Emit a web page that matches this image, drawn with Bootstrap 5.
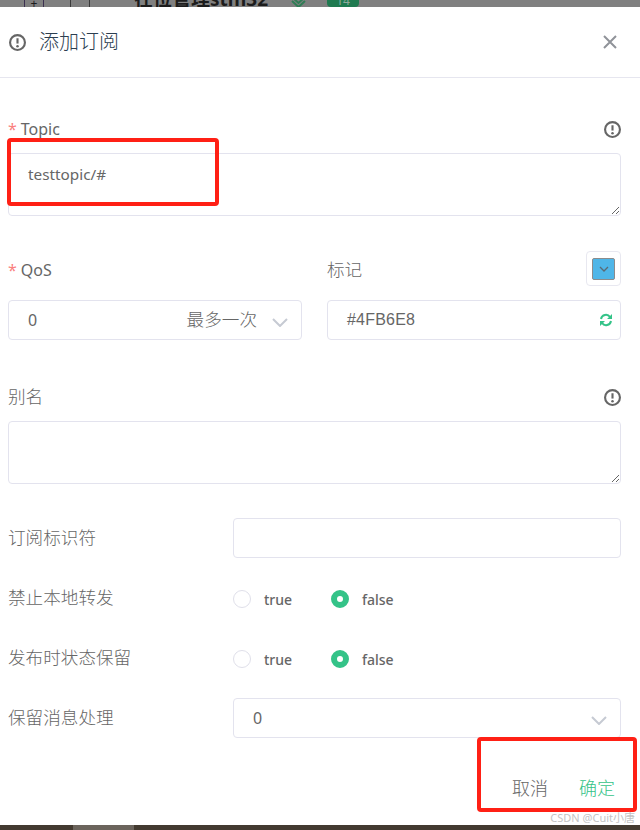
<!DOCTYPE html>
<html lang="zh">
<head>
<meta charset="UTF-8">
<meta name="viewport" content="width=device-width, initial-scale=1.0">
<title>添加订阅</title>
<link href="https://cdn.jsdelivr.net/npm/bootstrap@5.3.0/dist/css/bootstrap.min.css" rel="stylesheet">
<style>
html, body { height: 830px; overflow: hidden; }
body { position: relative; background: #fff; color: #666; font-family: "Noto Sans", "Noto Sans CJK SC", sans-serif; font-size: 16px; }
.back-strip { height: 7px; background: #808080; overflow: hidden; padding-left: 24px; color: #1c1c1c; }
.back-icons { width: 66px; height: 7px; margin-right: 44px; }
.back-plus { width: 20px; height: 7px; border: 1px solid #3c3050; border-top: 0; border-bottom: 0; text-align: center; font-size: 12px; line-height: 7px; }
.back-bars { width: 20px; height: 7px; border: 1px solid #3a3a3a; border-top: 0; border-bottom: 0; margin-left: 26px; }
.back-title { font-size: 19px; font-weight: 700; line-height: 19px; margin-top: -10px; width: 157px; white-space: nowrap; }
.back-chev { margin-right: 21px; }
.back-badge { width: 32px; height: 12px; margin-top: -5px; background: #1f7a50; border-radius: 4px; font-size: 12px; line-height: 12px; text-align: center; color: #8fa89a; }
.dlg-head { height: 71px; padding: 0 23px 0 9px; border-bottom: 1px solid #e6e6ef; }
.dlg-title { font-size: 20px; color: #2c3e50; margin-left: 13px; font-weight: 300; }
.dlg-body { padding: 0 19px 0 8px; }
.field-label { height: 24px; line-height: 24px; }
.cjk { font-size: 17.6px; font-weight: 300; position: relative; top: -1px; }
.req { color: #fa7f7f; margin-right: 4px; }
.ctl.form-control { border: 1px solid #e3e3ee; border-radius: 4px; font-size: 16px; color: #666; background-color: #fff; box-shadow: none; }
.area.form-control { height: 63px; padding: 9px 19px; line-height: 22px; font-size: 15.3px; }
.box { height: 40px; padding: 0 19px; }
.hex { font-family: "Liberation Sans", sans-serif; letter-spacing: .2px; }
.swatch-wrap { width: 35px; height: 35px; margin-top: -3px; border: 1px solid #e8e8f0; border-radius: 4px; }
.swatch { width: 23px; height: 22px; background: #4fb6e8; border: 1px solid #8c8c8c; border-radius: 2px; }
.row-label { width: 225px; flex: none; }
.radio-dot { width: 18px; height: 18px; margin-top: 2px; border-radius: 50%; border: 1px solid #e0e0ea; background: #fff; }
.radio-dot.on { border: 6px solid #34c388; }
.radio-text { font-size: 14px; font-weight: 500; color: #666; margin-left: 13px; margin-top: 2px; }
.radio-text.wide { width: 29px; }
.radio-text.wide + .radio-dot { margin-left: 38px; }
.foot-row { margin: 38px -19px 0 0; padding-right: 25px; gap: 31px; }
.foot-btn { font-size: 18px; font-weight: 300; line-height: 24px; }
.foot-btn.ok { color: #34c388; }
.mark-box { position: absolute; border: 4px solid #ff2015; border-radius: 4px; }
.mark-a { left: 7px; top: 138px; width: 212px; height: 68px; }
.mark-b { left: 477px; top: 737px; width: 160px; height: 75px; }
.wm { position: absolute; right: 5px; top: 811px; font-size: 11px; line-height: 14px; color: #c4c4c4; }
.bottom-strip { position: absolute; left: 0; right: 0; top: 825px; height: 5px; background: #433a30; }
.bottom-thumb { width: 61px; height: 5px; margin-left: 73px; background: #6b645c; }
.topic-label { margin-top: 39px; }
.area-gap { margin-top: 12px; }
.qos-row { gap: 25px; margin-top: 42px; }
.half { flex: 1 1 0; }
.qos-label { margin-bottom: 18px; }
.tail-text { margin-right: 15px; }
.chev { margin-right: -6px; margin-top: 5px; }
.color-box { padding-right: 7px; }
.alias-label { margin-top: 45px; }
.opt-row { height: 40px; margin-top: 20px; }
.opt-first { margin-top: 34px; }
</style>
</head>
<body>
    <div class="back-strip d-flex align-items-start">
        <div class="back-icons d-flex">
            <div class="back-plus">+</div>
            <div class="back-bars"></div>
        </div>
        <div class="back-title">在位管理stm32</div>
        <svg class="back-chev" width="15" height="7" viewBox="0 0 15 7"><path d="M1 -3l6.500 6L14 -3M1 1l6.500 6L14 1" fill="none" stroke="#2f7d55" stroke-width="2"/></svg>
        <div class="back-badge">14</div>
    </div>

    <!-- Dialog header -->
    <div class="dlg-head d-flex align-items-center justify-content-between">
        <div class="d-flex align-items-center">
            <svg width="17" height="17" viewBox="0 0 16 16"><circle cx="8" cy="8" r="7" fill="none" stroke="#666" stroke-width="2"/><path d="M8 4v5" stroke="#666" stroke-width="2"/><circle cx="8" cy="11.500" r="1.200" fill="#666"/></svg>
            <span class="dlg-title">添加订阅</span>
        </div>
        <svg width="14" height="14" viewBox="0 0 14 14"><path d="M1 1l12 12M13 1L1 13" stroke="#909399" stroke-width="2"/></svg>
    </div>

    <div class="dlg-body">
        <!-- Topic -->
        <div class="field-label d-flex justify-content-between align-items-center topic-label">
            <span><span class="req">*</span>Topic</span>
            <svg width="17" height="17" viewBox="0 0 16 16"><circle cx="8" cy="8" r="7" fill="none" stroke="#666" stroke-width="2"/><path d="M8 4v5" stroke="#666" stroke-width="2"/><circle cx="8" cy="11.500" r="1.200" fill="#666"/></svg>
        </div>
        <textarea class="ctl form-control area area-gap">testtopic/#</textarea>

        <!-- QoS and mark colour -->
        <div class="d-flex qos-row">
            <div class="half">
                <div class="field-label qos-label"><span class="req">*</span>QoS</div>
                <div class="ctl form-control box d-flex align-items-center justify-content-between">
                    <span>0</span>
                    <span class="d-flex align-items-center">
                        <span class="tail-text cjk">最多一次</span>
                        <svg class="chev" width="16" height="9" viewBox="0 0 16 9"><path d="M1 1l7 7 7-7" fill="none" stroke="#c6cad3" stroke-width="2"/></svg>
                    </span>
                </div>
            </div>
            <div class="half">
                <div class="field-label d-flex justify-content-between align-items-center qos-label">
                    <span class="cjk">标记</span>
                    <div class="swatch-wrap d-flex align-items-center justify-content-center">
                        <div class="swatch d-flex align-items-center justify-content-center">
                            <svg width="10" height="6" viewBox="0 0 10 6"><path d="M1 1l4 4 4-4" fill="none" stroke="#5a6a75" stroke-width="1.300"/></svg>
                        </div>
                    </div>
                </div>
                <div class="ctl form-control box d-flex align-items-center justify-content-between color-box">
                    <span class="hex">#4FB6E8</span>
                    <svg width="14" height="14" viewBox="0 0 14 14"><path d="M2 6a5 5 0 0 1 9-2M12 8a5 5 0 0 1-9 2" fill="none" stroke="#34c388" stroke-width="2"/><path d="M13 1v5H8zM1 13V8h5z" fill="#34c388"/></svg>
                </div>
            </div>
        </div>

        <!-- Alias -->
        <div class="field-label d-flex justify-content-between align-items-center alias-label">
            <span class="cjk">别名</span>
            <svg width="17" height="17" viewBox="0 0 16 16"><circle cx="8" cy="8" r="7" fill="none" stroke="#666" stroke-width="2"/><path d="M8 4v5" stroke="#666" stroke-width="2"/><circle cx="8" cy="11.500" r="1.200" fill="#666"/></svg>
        </div>
        <textarea class="ctl form-control area area-gap"></textarea>

        <!-- Subscription options -->
        <div class="d-flex align-items-center opt-row opt-first">
            <div class="row-label cjk">订阅标识符</div>
            <input class="ctl form-control box flex-grow-1" type="text">
        </div>
        <div class="d-flex align-items-center opt-row">
            <div class="row-label cjk">禁止本地转发</div>
            <span class="radio-dot"></span><span class="radio-text wide">true</span>
            <span class="radio-dot on"></span><span class="radio-text">false</span>
        </div>
        <div class="d-flex align-items-center opt-row">
            <div class="row-label cjk">发布时状态保留</div>
            <span class="radio-dot"></span><span class="radio-text wide">true</span>
            <span class="radio-dot on"></span><span class="radio-text">false</span>
        </div>
        <div class="d-flex align-items-center opt-row">
            <div class="row-label cjk">保留消息处理</div>
            <div class="ctl form-control box flex-grow-1 d-flex align-items-center justify-content-between">
                <span>0</span>
                <svg class="chev" width="16" height="9" viewBox="0 0 16 9"><path d="M1 1l7 7 7-7" fill="none" stroke="#c6cad3" stroke-width="2"/></svg>
            </div>
        </div>

        <!-- Footer -->
        <div class="d-flex justify-content-end foot-row">
            <span class="foot-btn">取消</span>
            <span class="foot-btn ok">确定</span>
        </div>
    </div>

    <div class="mark-box mark-a"></div>
    <div class="mark-box mark-b"></div>
    <div class="wm">CSDN @Cuit小唐</div>
    <div class="bottom-strip"><div class="bottom-thumb"></div></div>

    <script src="https://cdn.jsdelivr.net/npm/bootstrap@5.3.0/dist/js/bootstrap.bundle.min.js"></script>
</body>
</html>
